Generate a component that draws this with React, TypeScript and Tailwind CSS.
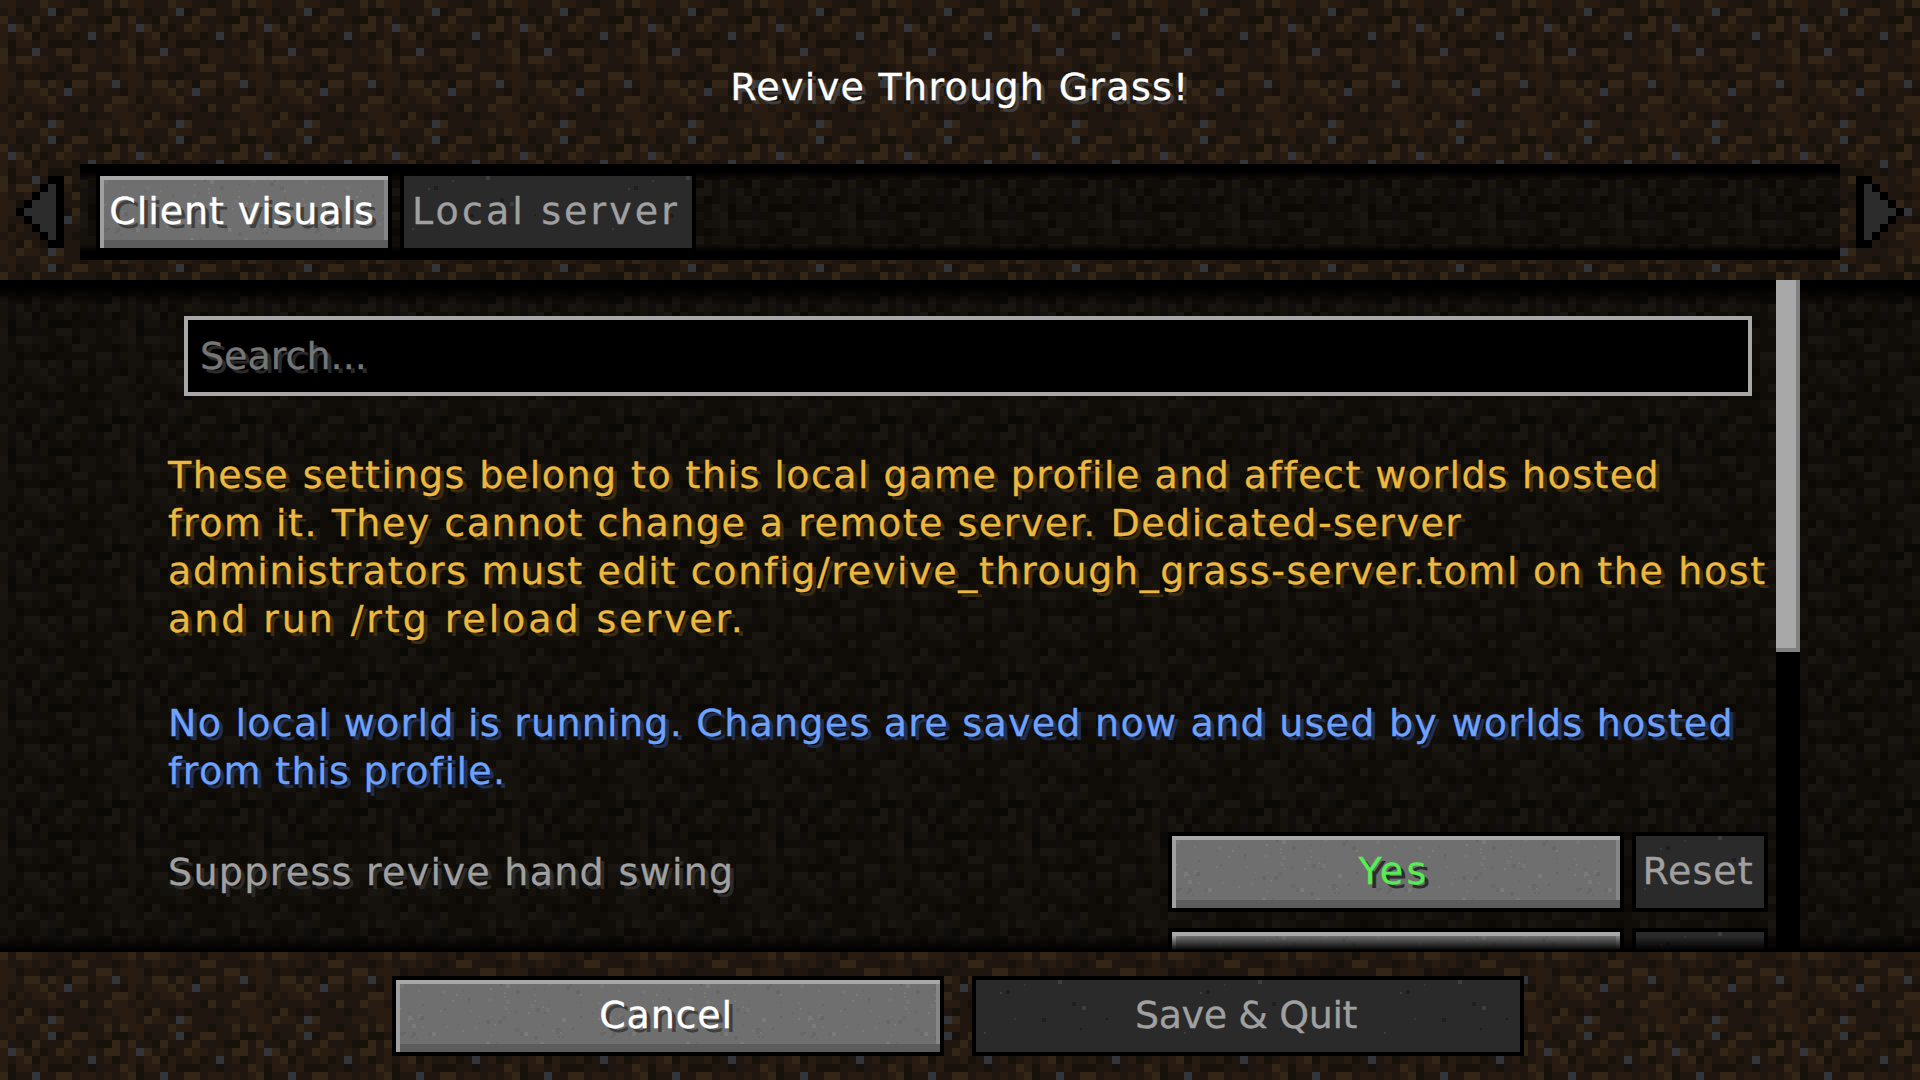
import React from 'react';

const DIRT = [
  'ccbbbdccbbabbdbd', 'bcabbceabddbbcaa', 'dbbadbbbdbbbaadb', 'cedbcabdccbcbddb',
  'cbcdacbbcabebcab', 'caccbcaaabbabbbd', 'dabbebbddbccbcbc', 'dbddccbbcaccbbcc',
  'cbbcbcbabddbbbab', 'ccabbaabbbbbddbc', 'ccbddbdcaddbcceb', 'cbbccdbceccacbba',
  'cacbccdbbbbbbbdd', 'bcbbbbccbadbbdcc', 'cbadbababbbabbcc', 'cbdccbedbbbbccbc',
];

const LIGHT: Record<string, string> = { a: '#17110c', b: '#1f160f', c: '#281c12', d: '#342617', e: '#32353a' };
const DARK: Record<string, string> = { a: '#0b0906', b: '#100d09', c: '#15110c', d: '#191510', e: '#100e0c' };

function tileCells(colors: Record<string, string>) {
  return DIRT.flatMap((row, y) =>
    row.split('').map((c, x) => <rect key={`${x}-${y}`} x={x * 8} y={y * 8} width="8" height="8" fill={colors[c]} />)
  );
}

// small seeded generator so the speckle stays the same on every load
function speckle(seed: number, count: number, colors: string[], w: number, h: number) {
  let s = seed;
  const next = () => {
    s = (s * 16807) % 2147483647;
    return s / 2147483647;
  };
  const out = [];
  for (let i = 0; i < count; i++) {
    const size = next() > 0.7 ? 4 : 2;
    out.push(
      <rect
        key={i}
        x={Math.floor(next() * w / 2) * 2}
        y={Math.floor(next() * h / 2) * 2}
        width={size}
        height={size}
        fill={colors[Math.floor(next() * colors.length)]}
      />
    );
  }
  return out;
}

function Defs() {
  return (
    <svg className="absolute w-0 h-0">
      <defs>
        <pattern id="dirt" width="128" height="128" patternUnits="userSpaceOnUse">{tileCells(LIGHT)}</pattern>
        <pattern id="dirt-dark" width="128" height="128" patternUnits="userSpaceOnUse">{tileCells(DARK)}</pattern>
        <pattern id="stone" width="200" height="80" patternUnits="userSpaceOnUse">
          {speckle(71, 120, ['#757575', '#6a6a6a', '#7a7a7a', '#676767'], 200, 80)}
        </pattern>
        <pattern id="stone-dark" width="200" height="80" patternUnits="userSpaceOnUse">
          {speckle(43, 12, ['#3e3e3e', '#363636', '#1e1e1e'], 200, 80)}
        </pattern>
      </defs>
    </svg>
  );
}

function Fill({ id }: { id: string }) {
  return (
    <svg className="absolute inset-0 w-full h-full pointer-events-none" shapeRendering="crispEdges">
      <rect width="100%" height="100%" fill={`url(#${id})`} />
    </svg>
  );
}

function Arrow({ flip }: { flip?: boolean }) {
  return (
    <svg viewBox="0 0 6 9" shapeRendering="crispEdges" className={`w-12 h-[72px] shrink-0 ${flip ? '-scale-x-100' : ''}`}>
      <path fill="#000" d="M0 0H2V1H3V2H4V3H5V4H6V5H5V6H4V7H3V8H2V9H0Z" />
      <path fill="#2c2c2c" d="M1 1H2V2H3V3H4V4H5V5H4V6H3V7H2V8H1Z" />
    </svg>
  );
}

interface McButtonProps {
  active?: boolean;
  className: string;
  textClass?: string;
  children?: React.ReactNode;
}

function McButton({ active, className, textClass, children }: McButtonProps) {
  return (
    <div className={`border-4 border-black shrink-0 ${className}`}>
      <div
        className={`relative w-full h-full flex items-center justify-center pb-0.5 pr-1 whitespace-nowrap ${
          active
            ? 'bg-[#6f6f6f] text-white [text-shadow:4px_4px_0_#3f3f3f]'
            : 'bg-[#2a2a2a] text-[#a0a0a0]'
        }`}
      >
        <Fill id={active ? 'stone' : 'stone-dark'} />
        {active && (
          <div className="absolute inset-0 shadow-[inset_0_4px_0_#a8a8a8,inset_4px_0_0_#a0a0a0,inset_0_-8px_0_#5c5c5c,inset_-4px_0_0_#868686]" />
        )}
        <span className={`relative ${textClass || ''}`}>{children}</span>
      </div>
    </div>
  );
}

export default function App() {
  return (
    <div className="relative w-[1920px] h-[1080px] overflow-hidden bg-[#1f160f] flex flex-col font-['DejaVu_Sans',sans-serif] text-[38px] leading-[48px] [-webkit-text-stroke:0.3px_currentColor]">
      <Defs />
      <Fill id="dirt" />

      {/* Header */}
      <div className="relative h-[280px] shrink-0 flex flex-col">
        <h1 className="pt-[63px] text-center text-white [text-shadow:4px_4px_0_#3f3f3f] font-normal tracking-[1.3px]">
          Revive Through Grass!
        </h1>
        <div className="mt-[53px] h-24 px-4 flex items-center gap-4">
          <Arrow flip />
          <div className="relative flex-1 h-24 pl-4 flex items-center gap-2">
            <Fill id="dirt-dark" />
            <div className="absolute inset-x-0 top-0 h-4 bg-linear-to-b from-black from-50% to-transparent" />
            <div className="absolute inset-x-0 bottom-0 h-4 bg-linear-to-t from-black from-50% to-transparent" />
            <McButton active className="relative w-[296px] h-20" textClass="tracking-[0.9px]">Client visuals</McButton>
            <McButton className="relative w-[296px] h-20" textClass="tracking-[3.1px]">Local server</McButton>
          </div>
          <Arrow />
        </div>
      </div>

      {/* Scrolling list */}
      <div className="relative flex-1 min-h-0 flex overflow-hidden">
        <Fill id="dirt-dark" />
        <div className="relative w-[1776px] shrink-0 pt-9 pl-[168px] pr-2">
          <div className="ml-4 w-[1568px] h-20 border-4 border-[#a8a8a8] bg-black pl-3 flex items-center">
            <span className="text-[#767676] [text-shadow:4px_4px_0_#2a2a2a]">Search...</span>
          </div>

          <div className="mt-[55px] text-[#ecb83f] [text-shadow:4px_4px_0_#3b2e10] whitespace-nowrap">
            <div className="tracking-[1.45px]">These settings belong to this local game profile and affect worlds hosted</div>
            <div className="tracking-[1.5px]">from it. They cannot change a remote server. Dedicated-server</div>
            <div className="tracking-[1.64px]">administrators must edit config/revive_through_grass-server.toml on the host</div>
            <div className="tracking-[2.9px]">and run /rtg reload server.</div>
          </div>

          <div className="mt-14 text-[#6ea2ff] [text-shadow:4px_4px_0_#1f2f55] whitespace-nowrap">
            <div className="tracking-[1.26px]">No local world is running. Changes are saved now and used by worlds hosted</div>
            <div className="tracking-[1.36px]">from this profile.</div>
          </div>

          <div className="mt-[37px] h-20 flex items-center gap-2">
            <span className="flex-1 text-[#a0a0a0] [text-shadow:4px_4px_0_#2a2a2a] whitespace-nowrap tracking-[1.3px]">
              Suppress revive hand swing
            </span>
            <McButton active className="w-[456px] h-20" textClass="text-[#55ee55] [text-shadow:4px_4px_0_#2c2c2c] tracking-[3.3px]">
              Yes
            </McButton>
            <McButton className="w-[136px] h-20" textClass="tracking-[1px]">Reset</McButton>
          </div>

          <div className="mt-4 h-20 flex items-center gap-2">
            <span className="flex-1" />
            <McButton active className="w-[456px] h-20" />
            <McButton className="w-[136px] h-20" />
          </div>
        </div>

        <div className="absolute inset-x-0 top-0 h-6 bg-linear-to-b from-black from-30% to-transparent pointer-events-none" />
        <div className="absolute inset-x-0 bottom-0 h-4 bg-linear-to-t from-black from-10% to-transparent pointer-events-none" />

        {/* Scrollbar */}
        <div className="relative w-6 shrink-0 bg-black">
          <div className="h-[372px] bg-[#a8a8a8] shadow-[inset_-4px_-4px_0_#808080]" />
        </div>
      </div>

      {/* Footer */}
      <div className="relative h-32 shrink-0 pt-6 pl-[392px] flex gap-7 items-start">
        <McButton active className="w-[552px] h-20" textClass="tracking-[0.8px]">Cancel</McButton>
        <McButton className="w-[552px] h-20" textClass="tracking-[-0.4px]">Save &amp; Quit</McButton>
      </div>
    </div>
  );
}
